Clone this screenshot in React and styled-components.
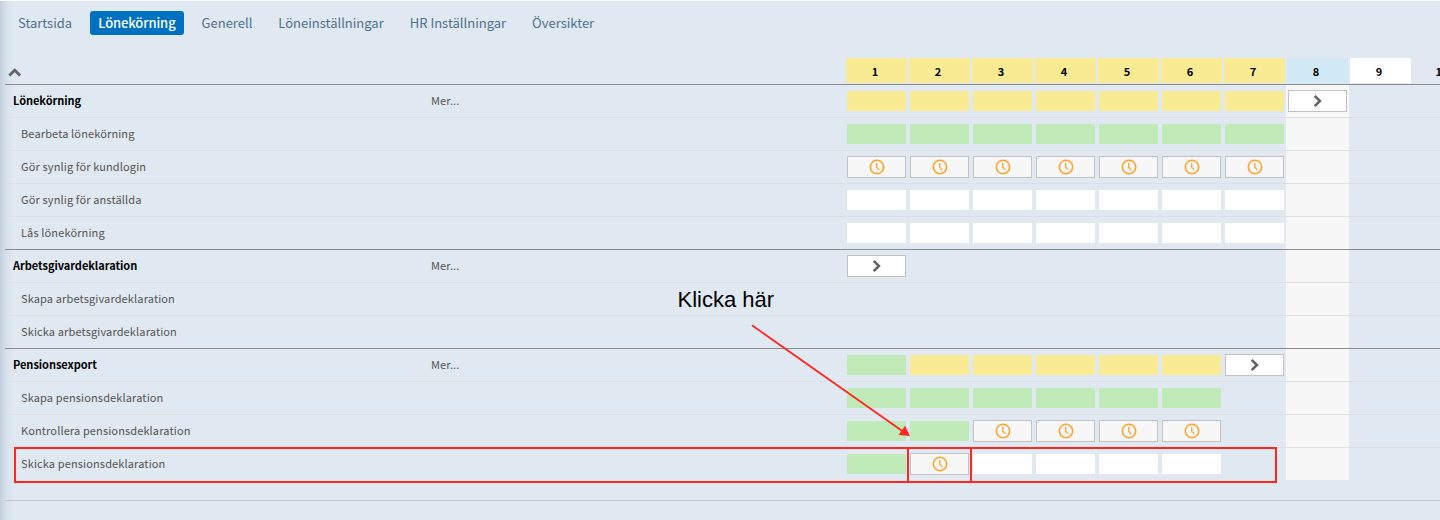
import React from 'react'
import styled, { createGlobalStyle } from 'styled-components';


const GlobalStyle = createGlobalStyle`
  * {
    box-sizing: border-box;
  }
  body {
    margin: 0;
    background: #e0e8f1;
    font-family: "Noto Sans CJK SC", "Noto Sans", sans-serif;
    overflow: hidden;
  }
`;

const Page = styled.div`
  position: relative;
  width: 1440px;
  height: 520px;
  padding-left: 5px;
  overflow: hidden;
  border-top: 1px solid #fafcfd;
  background: linear-gradient(to right, #c0cfdc 0, #d0dbe7 4px, #dbe4ee 8px, #e0e8f1 14px);
`;

const Nav = styled.nav`
  display: flex;
  align-items: center;
  gap: 10px;
  height: 57px;
  padding: 0 0 13px 5px;
`;

const NavItem = styled.a`
  height: 24px;
  padding: 0 8px;
  border-radius: 3px;
  line-height: 24px;
  white-space: nowrap;
  font-size: 13px;
  font-weight: ${props => props.$active ? 500 : 400};
  letter-spacing: ${props => props.$active ? -0.1 : 0}px;
  color: ${props => props.$active ? 'white' : '#507090'};
  background: ${props => props.$active ? '#0070c0' : 'transparent'};
`;

const Row = styled.div`
  display: grid;
  grid-template-columns: 418px 422px repeat(10, 63px);
  height: 33px;
  border-top: 1px solid ${props => props.$main ? '#8c8c8c' : '#dfdfdf'};
`;

const HeadRow = styled(Row)`
  height: 26px;
  border-top: none;
`;

const Toggle = styled.div`
  grid-column: span 2;
  padding: 10px 0 0 3px;
  line-height: 0;
`;

const HeadCell = styled.div`
  height: 25px;
  margin: 0 1px;
  padding-right: 3px;
  line-height: 26px;
  text-align: center;
  font-size: 11px;
  font-weight: 700;
  color: black;
  background: ${props => props.$bg};
`;

const Label = styled.div`
  padding-left: ${props => props.$main ? 8 : 16}px;
  line-height: 31px;
  white-space: nowrap;
  font-size: 11px;
  font-weight: ${props => props.$main ? 700 : 400};
  letter-spacing: ${props => props.$main ? -0.04 : 0.13}px;
  color: ${props => props.$main ? 'black' : '#555'};
`;

const More = styled.div`
  padding-left: 8px;
  line-height: 31px;
  font-size: 11px;
  letter-spacing: 0.1px;
  color: #555;
`;

const Cell = styled.div`
  display: flex;
  align-items: center;
  padding: 0 2px;
  background: ${props => props.$current ? '#f7f7f7' : 'transparent'};
`;

const Bar = styled.div`
  width: 59px;
  height: 20px;
  background: ${props => props.$color};
`;

const Box = styled.button`
  display: flex;
  align-items: center;
  justify-content: center;
  width: 59px;
  height: 22px;
  padding: 0;
  border: 1px solid #c2c2c2;
  background: ${props => props.$color};
`;

const Footer = styled.div`
  margin-top: 20px;
  height: 20px;
  border-top: 1px solid #c4c4c4;
`;

const Highlight = styled.div`
  position: absolute;
  top: 446px;
  left: ${props => props.$left}px;
  width: ${props => props.$width}px;
  height: 36px;
  border: 2px solid #ff2620;
`;

const Hint = styled.div`
  position: absolute;
  top: 286px;
  left: 677.5px;
  line-height: 25px;
  white-space: nowrap;
  font-family: "Liberation Sans", Arial, sans-serif;
  font-size: 22px;
  color: black;
`;

const Arrow = styled.svg`
  position: absolute;
  top: 319px;
  left: 745px;
`;

const colors = {
  y: '#f9eb94',
  g: '#c1eab9',
  w: '#ffffff',
};

const nav = [
  { name: 'Startsida' },
  { name: 'Lönekörning', active: true },
  { name: 'Generell' },
  { name: 'Löneinställningar' },
  { name: 'HR Inställningar' },
  { name: 'Översikter' },
];

const months = ['y', 'y', 'y', 'y', 'y', 'y', 'y', 'b', 'w', ''];
const monthColors = { y: '#f9eb94', b: '#d1e9f5', w: 'white' };

// y = yellow, g = green, w = white, c = clock, n = next
const rows = [
  { name: 'Lönekörning', main: true, cells: 'yyyyyyyn' },
  { name: 'Bearbeta lönekörning', cells: 'ggggggg' },
  { name: 'Gör synlig för kundlogin', cells: 'ccccccc' },
  { name: 'Gör synlig för anställda', cells: 'wwwwwww' },
  { name: 'Lås lönekörning', cells: 'wwwwwww' },
  { name: 'Arbetsgivardeklaration', main: true, cells: 'n' },
  { name: 'Skapa arbetsgivardeklaration', cells: '' },
  { name: 'Skicka arbetsgivardeklaration', cells: '' },
  { name: 'Pensionsexport', main: true, cells: 'gyyyyyn' },
  { name: 'Skapa pensionsdeklaration', cells: 'gggggg' },
  { name: 'Kontrollera pensionsdeklaration', cells: 'ggcccc' },
  { name: 'Skicka pensionsdeklaration', cells: 'gcwwww' },
];

const Clock = () => (
  <svg width="16" height="16" viewBox="0 0 16 16" fill="none" stroke="#ffa42e">
    <circle cx="8" cy="8" r="6.7" strokeWidth="1.6" />
    <path d="M7.7 4v4.3l2.6 2.6" strokeWidth="1.3" />
  </svg>
)

const Next = () => (
  <svg width="10" height="14" viewBox="0 0 10 14" fill="none" stroke="#636363" strokeWidth="2.6">
    <path d="M1.7 1.9L6.9 7L1.7 12.1" />
  </svg>
)

const Status = ({ type }) => {
  if (type === 'c') return <Box $color="#f7f7f7"><Clock /></Box>
  if (type === 'n') return <Box $color="white"><Next /></Box>
  if (!type) return null
  return <Bar $color={colors[type]} />
}

const App = () => {
  return (
    <Page>
      <GlobalStyle />
      <Nav>
        {nav.map(item => (
          <NavItem key={item.name} $active={item.active}>{item.name}</NavItem>
        ))}
      </Nav>
      <HeadRow>
        <Toggle>
          <svg width="14" height="10" viewBox="0 0 14 10" fill="none" stroke="#636363" strokeWidth="2.7">
            <path d="M1.3 7.5L6.7 2.2L12.1 7.5" />
          </svg>
        </Toggle>
        {months.map((color, i) => (
          <HeadCell key={i} $bg={monthColors[color] || 'transparent'}>{i + 1}</HeadCell>
        ))}
      </HeadRow>
      {rows.map(row => (
        <Row key={row.name} $main={row.main}>
          <Label $main={row.main}>{row.name}</Label>
          <More>{row.main && 'Mer...'}</More>
          {months.map((color, i) => (
            <Cell key={i} $current={color === 'b'}>
              <Status type={row.cells[i]} />
            </Cell>
          ))}
        </Row>
      ))}
      <Footer />
      <Highlight $left={14} $width={1263} />
      <Highlight $left={907} $width={65} />
      <Hint>Klicka här</Hint>
      <Arrow width="170" height="125" viewBox="745 320 170 125">
        <path d="M752 325.3L903 431.5" stroke="#ff2620" strokeWidth="1.8" />
        <path d="M910 436L905 425.8L898.6 435Z" fill="#ff2620" />
      </Arrow>
    </Page>
  )
}

export default App
